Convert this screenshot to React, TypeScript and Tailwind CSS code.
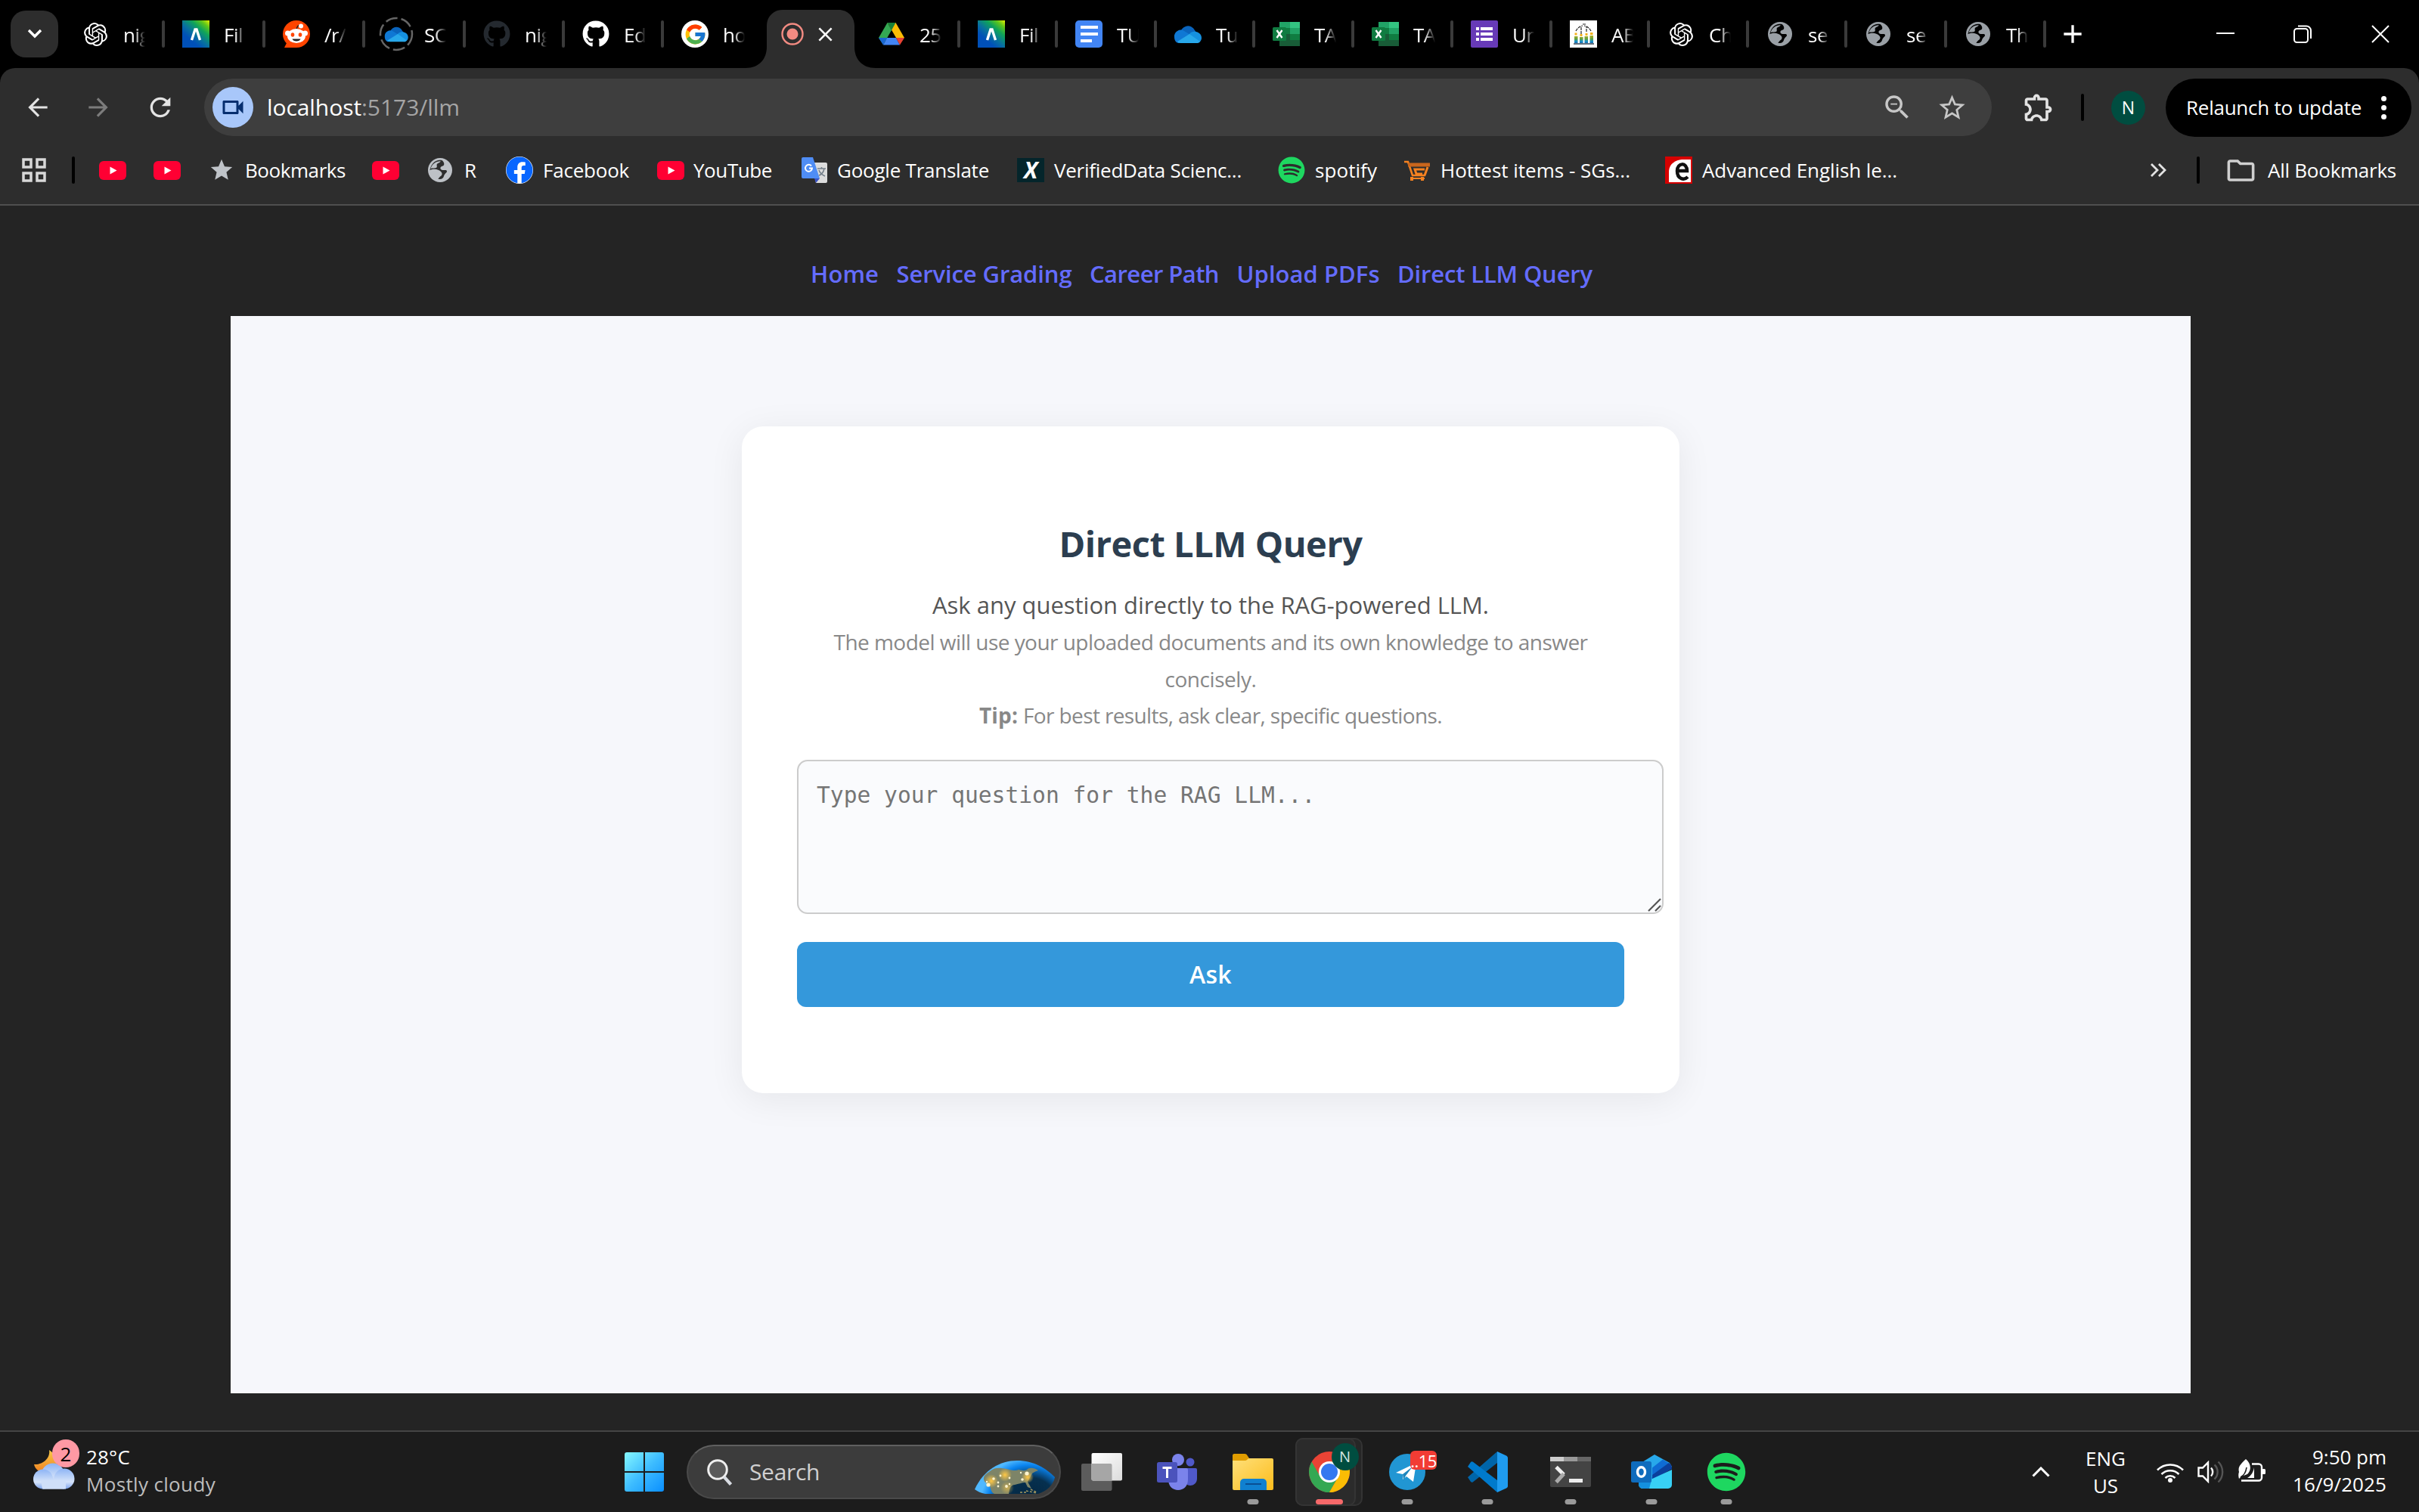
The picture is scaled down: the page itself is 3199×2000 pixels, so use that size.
import { useLayoutEffect, useRef, useState, type ReactNode } from "react";
import { SiOpenai } from "react-icons/si";
import { FaGithub, FaSpotify, FaFacebook } from "react-icons/fa";
import { FcGoogle } from "react-icons/fc";
import {
  MdArrowBack,
  MdArrowForward,
  MdRefresh,
  MdOutlineVideocam,
  MdStarBorder,
  MdStar,
  MdZoomOut,
  MdOutlineExtension,
  MdOutlineFolder,
  MdAdd,
  MdClose,
} from "react-icons/md";

/** Single line of text whose tracking is adjusted to fill the given width. */
function Fit({ w, className = "", children }: { w: number; className?: string; children: string }) {
  const ref = useRef<HTMLSpanElement>(null);
  const [spacing, setSpacing] = useState(0);
  useLayoutEffect(() => {
    if (ref.current) {
      setSpacing((w - ref.current.getBoundingClientRect().width) / children.length);
    }
  }, [w, children]);
  return (
    <span ref={ref} className={`inline-block shrink-0 whitespace-nowrap ${className}`} style={{ letterSpacing: spacing }}>
      {children}
    </span>
  );
}

/* ---------- favicons ---------- */

const OpenAI = () => <SiOpenai className="size-[31px] text-white" />;

const Lambda = () => (
  <svg viewBox="0 0 36 36" className="size-9">
    <defs>
      <linearGradient id="lam" x1="1" y1="0" x2="0.35" y2="0.75">
        <stop offset="0" stopColor="#e6f000" />
        <stop offset="0.22" stopColor="#5cc51c" />
        <stop offset="0.45" stopColor="#0fa35a" />
        <stop offset="0.75" stopColor="#0870a0" />
        <stop offset="1" stopColor="#0050b8" />
      </linearGradient>
    </defs>
    <rect width="36" height="36" fill="url(#lam)" />
    <path d="M12.500 26L17 12h2l4.500 14" fill="none" stroke="#fff" strokeWidth="3.400" />
  </svg>
);

const Reddit = () => (
  <svg viewBox="0 0 36 36" className="size-9">
    <circle cx="18" cy="18" r="18" fill="#ff4500" />
    <path d="M2 36h16V24L6 28z" fill="#ff4500" />
    <path d="M18 12c1-4 2-6 5-5" fill="none" stroke="#222" strokeWidth="1.500" />
    <circle cx="24" cy="7.500" r="3" fill="#fff" />
    <circle cx="6.500" cy="17" r="3.500" fill="#fff" />
    <circle cx="29.500" cy="17" r="3.500" fill="#fff" />
    <ellipse cx="18" cy="20.500" rx="12" ry="9.500" fill="#fff" />
    <ellipse cx="13" cy="19" rx="2.300" ry="2.700" fill="#ff4500" />
    <ellipse cx="23" cy="19" rx="2.300" ry="2.700" fill="#ff4500" />
    <path d="M12.500 24.500h11c-1 4-10 4-11 0z" fill="#222" />
  </svg>
);

const Cloud = ({ ring = false }: { ring?: boolean }) => (
  <svg viewBox="0 0 46 46" className="-m-[5px] size-[46px] shrink-0">
    {ring && <circle cx="23" cy="23" r="21" fill="none" stroke="#666" strokeWidth="2.500" strokeDasharray="16 5" />}
    <g transform={ring ? "translate(3.500 3.200) scale(0.86)" : ""}>
      <path d="M13 23a10 10 0 0 1 19-5 9 9 0 0 1 3 6L20 30z" fill="#0a64bc" />
      <path d="M5 27a8.500 8.500 0 0 1 13-8l13 8-20 8c-4 0-6-4-6-8z" fill="#0f78d4" />
      <path d="M25 23c4-6 16-3 16 5 0 4-3 7-6 7L20 30z" fill="#1590df" />
      <path d="M9 33l16-10 14 10c-2 2-4 2-5 2H13c-2 0-3-1-4-2z" fill="#28a8ea" />
    </g>
  </svg>
);

const Drive = () => (
  <svg viewBox="0 0 34 30" className="h-[30px] w-[34px]">
    <path d="M22.500 0L34 20H23L11.500 0z" fill="#fbbc04" />
    <path d="M11.500 0L17 10 6 29 0 20z" fill="#34a853" />
    <path d="M11.500 0h11L17 10z" fill="#188038" />
    <path d="M11 20h12l5 9.500H6z" fill="#4285f4" />
    <path d="M0 20h11L6 29.500z" fill="#1967d2" />
    <path d="M23 20h11l-6 9.500z" fill="#ea4335" />
  </svg>
);

const Docs = () => (
  <svg viewBox="0 0 36 36" className="size-9">
    <rect width="36" height="36" rx="5" fill="#4285f4" />
    <path d="M7 9h23M7 18h23M7 27h15" stroke="#fff" strokeWidth="4" />
  </svg>
);

const Excel = () => (
  <svg viewBox="0 0 36 36" className="size-9">
    <path d="M9 2h14v8H9z" fill="#21a366" />
    <path d="M23 2h13v8H23z" fill="#33c481" />
    <path d="M9 10h14v8H9z" fill="#107c41" />
    <path d="M23 10h13v8H23z" fill="#21a366" />
    <path d="M9 18h14v8H9z" fill="#185c37" />
    <path d="M23 18h13v8H23z" fill="#107c41" />
    <path d="M9 26h27v8H9z" fill="#185c37" />
    <rect y="9" width="18" height="18" rx="1.500" fill="#107c41" />
    <path d="M5.500 13l7 10M12.500 13l-7 10" stroke="#fff" strokeWidth="2.400" />
  </svg>
);

const Forms = () => (
  <svg viewBox="0 0 36 36" className="size-9">
    <rect width="36" height="36" rx="2" fill="#673ab7" />
    <path d="M7 11h4M7 18h4M7 25h4M13 11h16M13 18h16M13 25h16" stroke="#fff" strokeWidth="4" />
  </svg>
);

const People = () => (
  <svg viewBox="0 0 36 36" className="size-9">
    <defs>
      <linearGradient id="ppl" x1="0" y1="0" x2="0" y2="1">
        <stop offset="0" stopColor="#b8b020" />
        <stop offset="0.450" stopColor="#5fa040" />
        <stop offset="0.750" stopColor="#1a94c8" />
        <stop offset="1" stopColor="#1a6ab0" />
      </linearGradient>
    </defs>
    <rect width="36" height="36" fill="#fff" />
    <path d="M8 14c2-4 5-6 9-7M28 14c-2-4-5-6-9-7M15 18V9M22 15V8M17 5h4" fill="none" stroke="#222" strokeWidth="1.200" strokeDasharray="4 1" />
    <path d="M6 21h4.500v9H6zM13 22h4.500v8H13zM19.500 21H24v9h-4.500zM26.500 20H31v10h-4.500z" fill="url(#ppl)" />
    <path d="M6.500 16.500h3v3h-3zM13.500 18h3v3h-3zM20.500 17h3v3h-3zM27 16h3.500v3H27z" fill="#f5b21a" />
    <path d="M5 31h27" stroke="#345" strokeWidth="1.500" />
  </svg>
);

const Globe = ({ cut = "#000" }: { cut?: string }) => (
  <svg viewBox="0 0 24 24" className="size-8">
    <circle cx="12" cy="12" r="12" fill={cut === "#000" ? "#9aa0a6" : "#bdc1c6"} />
    <path
      d="M1.800 12.200C4 10.500 8 10.800 10.500 12c1.600.8 2.800 1.600 3.300 3 .4 1.400-.3 2.600-1.500 3.200-1 .6-1.200 1.700-2.300 2.600 3.400.7 5.300-.6 5.800-3 .3-1.400 1.500-2.500 2.600-3.600.7-.8.500-2-.7-2.200h-3.400c-1.600-.2-2.500-1.600-1.800-2.800.8-1.200 2.700-.8 3.300-2.200.6-1.600-.2-3.100-1.600-4.600-5.500-1.600-11 2-12.400 9.800z"
      fill={cut}
    />
    <path d="M2.600 10.500C4 6 8 3 12.500 3.200c-.3 1.800-3 1.600-3.700 3-.4 1.400.6 2.300-.4 3.300-1.400 1-4 .2-5.800 1z" fill={cut === "#000" ? "#9aa0a6" : "#bdc1c6"} />
  </svg>
);

const GoogleRound = () => (
  <span className="grid size-9 place-items-center rounded-full bg-white">
    <FcGoogle className="size-[31px]" />
  </span>
);

type TabInfo = { w: string; icon: ReactNode; text: string };

const tabsBefore: TabInfo[] = [
  { w: "w-[133px]", icon: <OpenAI />, text: "nig" },
  { w: "w-[133px]", icon: <Lambda />, text: "Fil" },
  { w: "w-[132px]", icon: <Reddit />, text: "/r/" },
  { w: "w-[133px]", icon: <Cloud ring />, text: "SC" },
  { w: "w-[131px]", icon: <FaGithub className="size-9 text-[#24292f]" />, text: "nig" },
  { w: "w-[131px]", icon: <FaGithub className="size-9 text-white" />, text: "Ed" },
  { w: "w-[130px]", icon: <GoogleRound />, text: "ho" },
];

const tabsAfter: TabInfo[] = [
  { w: "w-[132px]", icon: <Drive />, text: "25" },
  { w: "w-[129px]", icon: <Lambda />, text: "Fil" },
  { w: "w-[131px]", icon: <Docs />, text: "TU" },
  { w: "w-[130px]", icon: <Cloud />, text: "Tu" },
  { w: "w-[131px]", icon: <Excel />, text: "TA" },
  { w: "w-[131px]", icon: <Excel />, text: "TA" },
  { w: "w-[131px]", icon: <Forms />, text: "Un" },
  { w: "w-[129px]", icon: <People />, text: "AB" },
  { w: "w-[131px]", icon: <OpenAI />, text: "Ch" },
  { w: "w-[130px]", icon: <Globe />, text: "se" },
  { w: "w-[132px]", icon: <Globe />, text: "se" },
  { w: "w-[131px]", icon: <Globe />, text: "Th" },
];

function Tab({ tab, sep = true }: { tab: TabInfo; sep?: boolean }) {
  return (
    <div className={`flex h-[90px] shrink-0 items-center ${tab.w}`}>
      <span className="ml-[23px] grid size-9 shrink-0 place-items-center">{tab.icon}</span>
      <span className="mt-[2px] ml-[19px] w-[29px] overflow-hidden text-[26px] leading-9 tracking-[-0.5px] whitespace-nowrap text-white [mask-image:linear-gradient(to_right,black_50%,transparent)]">
        {tab.text}
      </span>
      {sep && <span className="ml-auto h-9 w-1 rounded-sm bg-[#3a3a3a]" />}
    </div>
  );
}

function TabStrip() {
  return (
    <div className="flex h-[90px] items-center bg-black">
      <button className="ml-[14px] grid h-[62px] w-[63px] shrink-0 place-items-center rounded-[20px] bg-[#2d2d2d]">
        <svg viewBox="0 0 20 14" className="h-[14px] w-5">
          <path d="M2 2l8 8 8-8" fill="none" stroke="#fff" strokeWidth="3.400" />
        </svg>
      </button>
      <div className="ml-[8px] flex">
        {tabsBefore.map((t, i) => (
          <Tab key={i} tab={t} sep={i < 6} />
        ))}
      </div>
      <div className="-mr-[21px] -ml-[22px] flex h-[90px] w-[173px] shrink-0">
        <svg viewBox="0 0 173 90" className="absolute h-[90px] w-[173px]">
          <path d="M0 90c18 0 28-12 28-28V34c0-12 9-21 21-21h74c12 0 21 9 21 21v28c0 16 10 28 28 28z" fill="#2d2d2d" />
        </svg>
        <div className="relative flex items-center">
          <svg viewBox="0 0 30 30" className="ml-[47px] size-[30px]">
            <circle cx="15" cy="15" r="13.500" fill="none" stroke="#f28b82" strokeWidth="2.400" />
            <circle cx="15" cy="15" r="7.500" fill="#f28b82" />
          </svg>
          <MdClose className="ml-[13px] size-[31px] text-white" />
        </div>
      </div>
      <div className="flex">
        {tabsAfter.map((t, i) => (
          <Tab key={i} tab={t} />
        ))}
      </div>
      <MdAdd className="ml-[15px] size-[40px] shrink-0 text-white" />
      <svg viewBox="0 0 24 24" className="ml-[170px] size-6 shrink-0">
        <path d="M0 11h24" stroke="#fff" strokeWidth="2" />
      </svg>
      <svg viewBox="0 0 24 24" className="ml-[78px] size-6 shrink-0" fill="none" stroke="#fff" strokeWidth="2">
        <rect x="1" y="5" width="18" height="18" rx="3.500" />
        <path d="M6 1.500h11a6 6 0 0 1 6 6V18" />
      </svg>
      <svg viewBox="0 0 24 24" className="ml-[79px] size-6 shrink-0">
        <path d="M1 1l22 22M23 1L1 23" stroke="#fff" strokeWidth="2" />
      </svg>
    </div>
  );
}

function Toolbar() {
  return (
    <div className="flex h-[104px] items-center">
      <MdArrowBack className="ml-[31px] size-[38px] shrink-0 text-[#e3e3e3]" />
      <MdArrowForward className="ml-[42px] size-[38px] shrink-0 text-[#7c7c7c]" />
      <MdRefresh className="ml-[43px] size-[40px] shrink-0 text-[#e3e3e3]" />
      <div className="ml-[38px] flex h-[76px] w-[2364px] shrink-0 items-center rounded-full bg-[#3e3e3e]">
        <span className="ml-[11px] grid size-[54px] place-items-center rounded-full bg-[#a8c7fa]">
          <MdOutlineVideocam className="size-[36px] text-[#062e6f]" />
        </span>
        <span className="ml-[18px] flex text-[30px] leading-10">
          <Fit w={125} className="text-white">localhost</Fit>
          <Fit w={130} className="text-[#a5a5a5]">:5173/llm</Fit>
        </span>
        <MdZoomOut className="ml-auto size-[42px] text-[#c7c7c7]" />
        <MdStarBorder className="mr-[32px] ml-[31px] size-[41px] text-[#c7c7c7]" />
      </div>
      <MdOutlineExtension className="ml-[40px] size-[44px] shrink-0 text-[#e3e3e3]" />
      <span className="ml-[34px] h-9 w-1 shrink-0 rounded-sm bg-black" />
      <span className="ml-[36px] grid size-[45px] shrink-0 place-items-center rounded-full bg-[#004d40] text-[23px] leading-none text-white">
        N
      </span>
      <div className="ml-[27px] flex h-[77px] w-[325px] shrink-0 items-center rounded-full bg-black">
        <Fit w={232} className="ml-[27px] text-[26px] leading-9 text-white">Relaunch to update</Fit>
        <span className="ml-[26px] flex flex-col gap-[5px]">
          <span className="size-[7px] rounded-full bg-white" />
          <span className="size-[7px] rounded-full bg-white" />
          <span className="size-[7px] rounded-full bg-white" />
        </span>
      </div>
    </div>
  );
}

const YouTube = ({ className = "" }: { className?: string }) => (
  <svg viewBox="0 0 36 25" className={`h-[25px] w-9 shrink-0 ${className}`}>
    <rect width="36" height="25" rx="6" fill="#ff0033" />
    <path d="M14.500 7.500v10l9-5z" fill="#fff" />
  </svg>
);

const Translate = () => (
  <svg viewBox="0 0 34 34" className="ml-[39px] size-[34px] shrink-0">
    <path d="M14 7h18a2 2 0 0 1 2 2v23a2 2 0 0 1-2 2H19z" fill="#dcdcdc" />
    <path d="M17 28h7l-5 6z" fill="#3a53c5" />
    <path d="M2 0h13l9 28H2a2 2 0 0 1-2-2V2a2 2 0 0 1 2-2z" fill="#4f8df5" />
    <path d="M13 11.500a4.500 4.500 0 1 0 1 3h-4" fill="none" stroke="#fff" strokeWidth="2" />
    <path d="M21 15h11M26.500 13v2M30 15c-1 5-4 8-7 9M23 17c1 3 4 6 8 8" fill="none" stroke="#75808a" strokeWidth="1.600" />
  </svg>
);

function BookmarksBar() {
  const label = "text-[26px] leading-9 text-white";
  return (
    <div className="flex h-[62px] items-center">
      <svg viewBox="0 0 32 32" className="ml-[29px] size-8 shrink-0" fill="none" stroke="#d8d8d8" strokeWidth="3.500">
        <path d="M2 2h10v10H2zM20 2h10v10H20zM2 20h10v10H2zM20 20h10v10H20z" />
      </svg>
      <span className="ml-[34px] h-9 w-1 shrink-0 rounded-sm bg-black" />
      <YouTube className="ml-[32px]" />
      <YouTube className="ml-[36px]" />
      <MdStar className="ml-[37px] size-[34px] shrink-0 text-[#c0c4c9]" />
      <Fit w={133} className={`ml-[14px] ${label}`}>Bookmarks</Fit>
      <YouTube className="ml-[35px]" />
      <span className="ml-[38px]">
        <Globe cut="#2d2d2d" />
      </span>
      <span className={`ml-[16px] w-[18px] ${label}`}>R</span>
      <span className="ml-[37px] size-9 shrink-0 rounded-full bg-white">
        <FaFacebook className="size-9 text-[#0866ff]" />
      </span>
      <Fit w={114} className={`ml-[13px] ${label}`}>Facebook</Fit>
      <YouTube className="ml-[37px]" />
      <Fit w={104} className={`ml-[12px] ${label}`}>YouTube</Fit>
      <Translate />
      <Fit w={201} className={`ml-[13px] ${label}`}>Google Translate</Fit>
      <span className="ml-[37px] grid h-8 w-9 shrink-0 place-items-center bg-[#04252b] text-[30px] leading-none font-bold text-white italic">
        X
      </span>
      <Fit w={248} className={`ml-[13px] ${label}`}>VerifiedData Scienc...</Fit>
      <span className="ml-[48px] grid size-9 shrink-0 place-items-center rounded-full bg-[#2d2d2d]">
        <FaSpotify className="size-9 text-[#1ed760]" />
      </span>
      <Fit w={82} className={`ml-[13px] ${label}`}>spotify</Fit>
      <svg viewBox="0 0 34 36" className="ml-[36px] h-9 w-[34px] shrink-0" fill="none" stroke="#f58220">
        <path d="M0 7h5l6 18h17" strokeWidth="2.600" />
        <path d="M5 11h29" strokeWidth="5" stroke="#c9661c" />
        <path d="M31 14l-4 11M27 17H14l2 6h8" strokeWidth="3" />
        <path d="M10 27v5M24 27v5" strokeWidth="4" />
        <path d="M8 29h19" strokeWidth="2" />
      </svg>
      <Fit w={251} className={`ml-[14px] ${label}`}>Hottest items - SGs...</Fit>
      <svg viewBox="0 0 36 36" className="ml-[46px] size-9 shrink-0">
        <rect width="36" height="36" fill="#d60000" />
        <path d="M5 34V19C6 9 14 5 22 4h12v30z" fill="#fff" />
        <path d="M16 19h13c0-12-13-11-13 0 0 11 9 13 14 8" fill="none" stroke="#111" strokeWidth="4.500" />
      </svg>
      <Fit w={258} className={`ml-[13px] ${label}`}>Advanced English le...</Fit>
      <svg viewBox="0 0 21 18" className="ml-auto h-[18px] w-[21px] shrink-0" fill="none" stroke="#e3e3e3" strokeWidth="2.800">
        <path d="M1 1l8 8-8 8M11 1l8 8-8 8" />
      </svg>
      <span className="ml-[40px] h-9 w-1 shrink-0 rounded-sm bg-black" />
      <MdOutlineFolder className="ml-[33px] size-[43px] shrink-0 text-[#d0d0d0]" />
      <Fit w={170} className={`mr-[30px] ml-[14px] ${label}`}>All Bookmarks</Fit>
    </div>
  );
}

function Page() {
  const small = "text-[28px] leading-[48.6px] text-[#888]";
  return (
    <div className="flex h-[1620px] flex-col bg-[#242424]">
      <nav className="flex gap-[23.5px] pt-[70px] pb-[36px] pl-[1072px] text-[31px] leading-10 font-semibold text-[#646cff]">
        <Fit w={90}>Home</Fit>
        <Fit w={232}>Service Grading</Fit>
        <Fit w={171}>Career Path</Fit>
        <Fit w={189}>Upload PDFs</Fit>
        <Fit w={258}>Direct LLM Query</Fit>
      </nav>
      <main className="ml-[305px] h-[1425px] w-[2592px] bg-[#f6f7fb] pt-[146px]">
        <section className="mx-auto flex h-[882px] w-[1240px] flex-col items-center rounded-[28px] bg-white px-[73px] pt-[125px] shadow-[0_8px_48px_rgba(0,0,0,0.07)]">
          <h1 className="flex h-[60px] text-[47px] leading-[60px] font-bold text-[#2c3e50]">
            <Fit w={401}>Direct LLM Query</Fit>
          </h1>
          <p className="mt-[25.5px] text-[31px] leading-[50px] text-[#555]">
            <Fit w={736}>Ask any question directly to the RAG-powered LLM.</Fit>
          </p>
          <div className={`mt-[0.7px] flex flex-col items-center ${small}`}>
            <Fit w={997}>The model will use your uploaded documents and its own knowledge to answer</Fit>
            <Fit w={121}>concisely.</Fit>
            <span className="flex">
              <Fit w={51} className="font-bold">Tip:</Fit>
              <Fit w={554} className="ml-[7px]">For best results, ask clear, specific questions.</Fit>
            </span>
          </div>
          <div className="relative mt-[34px] h-[204px] w-[1146px] shrink-0 self-start">
            <textarea
              className="block h-[204px] w-[1146px] resize-none rounded-[14px] border-2 border-[#ccc] bg-[#fafbfd] px-[24px] pt-[25px] font-['DejaVu_Sans_Mono',monospace] text-[29.6px] leading-10 placeholder:text-[#757575] placeholder:opacity-100"
              placeholder="Type your question for the RAG LLM..."
            />
            <svg viewBox="0 0 18 18" className="absolute right-[3px] bottom-[3px] size-[18px]">
              <path d="M1 17L17 1M10 17l7-7" stroke="#555" strokeWidth="2.200" />
            </svg>
          </div>
          <button className="mt-[37px] h-[86px] w-full shrink-0 rounded-[12px] bg-[#3498db] text-[32px] leading-10 font-semibold text-white">
            <Fit w={56}>Ask</Fit>
          </button>
        </section>
      </main>
    </div>
  );
}

/* ---------- taskbar ---------- */

const Weather = () => (
  <div className="relative ml-[44px] h-[66px] w-[62px] shrink-0">
    <svg viewBox="0 0 62 66" className="h-[66px] w-[62px]">
      <defs>
        <linearGradient id="moon" x1="0" y1="0" x2="0" y2="1">
          <stop offset="0" stopColor="#f7c948" />
          <stop offset="1" stopColor="#f08020" />
        </linearGradient>
        <linearGradient id="wcl" x1="0" y1="0" x2="0" y2="1">
          <stop offset="0" stopColor="#8db4f5" />
          <stop offset="0.650" stopColor="#d6e4fa" />
          <stop offset="1" stopColor="#7da3ec" />
        </linearGradient>
      </defs>
      <path d="M21 14c2 10-8 20-20 19 2 9 12 14 22 10s14-18-2-29z" fill="url(#moon)" />
      <circle cx="26" cy="47" r="15.500" fill="url(#wcl)" />
      <path d="M13 48.500h28v17H13z" fill="#c9dbf9" />
      <circle cx="13" cy="52.500" r="13" fill="url(#wcl)" />
      <circle cx="41" cy="52" r="13.500" fill="url(#wcl)" />
      <path d="M10 54h33v11.500H12z" fill="#cfdff9" />
    </svg>
    <span className="absolute top-0 left-[25px] grid h-[37px] w-9 place-items-center rounded-full bg-[#ff99a4] text-[26px] leading-none text-black">
      2
    </span>
  </div>
);

const Windows = () => (
  <svg viewBox="0 0 52 52" className="size-[52px] shrink-0">
    <defs>
      <linearGradient id="win" x1="0" y1="0" x2="52" y2="52" gradientUnits="userSpaceOnUse">
        <stop offset="0" stopColor="#86f8ff" />
        <stop offset="0.500" stopColor="#3dbcff" />
        <stop offset="1" stopColor="#0a8fff" />
      </linearGradient>
    </defs>
    <path
      d="M3 0h22v25H0V3a3 3 0 0 1 3-3zM27 0h22a3 3 0 0 1 3 3v22H27zM0 27h25v25H3a3 3 0 0 1-3-3zM27 27h25v22a3 3 0 0 1-3 3H27z"
      fill="url(#win)"
    />
  </svg>
);

const Earth = () => (
  <svg viewBox="0 0 106 44" className="mt-[14px] mr-[6px] ml-auto h-[44px] w-[106px]">
    <defs>
      <radialGradient id="sea" cx="72" cy="62" r="66" gradientUnits="userSpaceOnUse">
        <stop offset="0" stopColor="#04233c" />
        <stop offset="0.600" stopColor="#06304f" />
        <stop offset="0.850" stopColor="#0a84f0" />
        <stop offset="1" stopColor="#4fb8ff" />
      </radialGradient>
      <radialGradient id="city">
        <stop offset="0" stopColor="#ffc845" />
        <stop offset="1" stopColor="#ffc845" stopOpacity="0" />
      </radialGradient>
    </defs>
    <path d="M0 38C12 12 34 0 56 0c22 0 38 10 50 22-2 10-10 18-22 22H14C8 43 4 41 0 38z" fill="url(#sea)" />
    <path
      d="M20 14c8-6 14-4 22-3 8 2 12 3 16 1 5 1 8 2 11 0 3-3 9-3 15 1-5 2-8 3-9 6-2 3-3 6-5 9l5 9-5-2-3-6c-5 0-9 2-14 3-4 0-6 3-7 7l-1 5H26c-4-2-5-6-6-12-4-3-7-2-8-7s4-8 8-11z"
      fill="#7d8468"
    />
    <circle cx="22" cy="27" r="9" fill="url(#city)" />
    <circle cx="40" cy="19" r="9" fill="url(#city)" />
    <circle cx="70" cy="22" r="8" fill="url(#city)" />
    <circle cx="43" cy="36" r="9" fill="url(#city)" opacity="0.600" />
    <g fill="#fff5cf">
      <circle cx="18" cy="32" r="2.600" />
      <circle cx="25" cy="24" r="1.800" />
      <circle cx="34" cy="20" r="1.400" />
      <circle cx="46" cy="23" r="1.400" />
      <circle cx="31" cy="29" r="1.400" />
      <circle cx="31" cy="34" r="1.400" />
      <circle cx="42" cy="34" r="1.900" />
      <circle cx="46" cy="31" r="1.200" />
      <circle cx="69" cy="17" r="2.600" />
      <circle cx="63" cy="25" r="1.800" />
      <circle cx="61" cy="16" r="1.200" />
      <circle cx="16" cy="28" r="1.200" />
    </g>
    <path d="M60 42h8M68 40l14 3M74 38l8 4" stroke="#a89a60" strokeWidth="1.400" strokeDasharray="3 2" />
  </svg>
);

const TaskView = () => (
  <svg viewBox="0 0 54 50" className="h-[50px] w-[54px] shrink-0">
    <defs>
      <linearGradient id="tv" x1="0" y1="0" x2="1" y2="1">
        <stop offset="0" stopColor="#fff" />
        <stop offset="1" stopColor="#dcdcdc" />
      </linearGradient>
    </defs>
    <rect y="14" width="40.500" height="36" rx="2" fill="#5c5c5c" />
    <rect x="13.500" width="40.500" height="36.500" rx="2" fill="url(#tv)" />
    <path d="M13.500 14h25a2 2 0 0 1 2 2v20.500h-25a2 2 0 0 1-2-2z" fill="#a6a6a6" />
  </svg>
);

const Teams = () => (
  <svg viewBox="0 0 53 48" className="h-12 w-[53px] shrink-0">
    <circle cx="44" cy="11" r="5.500" fill="#5059c9" />
    <path d="M36 19h15a2 2 0 0 1 2 2v12c0 6-5 9-9 9s-8-3-8-9z" fill="#5059c9" />
    <circle cx="28" cy="8" r="8" fill="#7b83eb" />
    <path d="M15 19h24a2 2 0 0 1 2 2v13c0 9-6 14-13 14s-13-5-13-14z" fill="#7b83eb" />
    <rect y="11" width="27" height="27" rx="2.500" fill="#4b53bc" />
    <path d="M7.500 18.500h12M13.500 18v14" stroke="#fff" strokeWidth="3" />
  </svg>
);

const Explorer = () => (
  <svg viewBox="0 0 54 48" className="h-12 w-[54px]">
    <defs>
      <linearGradient id="fold" x1="0" y1="0" x2="1" y2="1">
        <stop offset="0" stopColor="#ffe07a" />
        <stop offset="1" stopColor="#fcbc1c" />
      </linearGradient>
    </defs>
    <path d="M2 0h14c2 0 3 1 4 3l4 6H0V2c0-1 1-2 2-2z" fill="#e09c00" />
    <path d="M22 6h30a2 2 0 0 1 2 2v38a2 2 0 0 1-2 2H2a2 2 0 0 1-2-2V9h17c2 0 3-3 5-3z" fill="url(#fold)" />
    <path d="M10 48V38a5 5 0 0 1 5-5h25a5 5 0 0 1 5 5v10z" fill="#1080d0" />
    <path d="M17 40h21" stroke="#0a4f93" strokeWidth="2" />
  </svg>
);

const Chrome = () => (
  <svg viewBox="0 0 54 54" className="size-[54px]">
    <circle cx="27" cy="27" r="27" fill="#ea4335" />
    <path d="M3.600 13.500A27 27 0 0 0 27 54l11.700-20.200-23.400 0z" fill="#34a853" />
    <path d="M27 54a27 27 0 0 0 23.400-40.500H27l11.700 20.300z" fill="#fbbc04" />
    <circle cx="27" cy="27" r="14" fill="#fff" />
    <circle cx="27" cy="27" r="11" fill="#3478f0" />
  </svg>
);

const Telegram = () => (
  <svg viewBox="0 0 48 48" className="size-12">
    <circle cx="24" cy="24" r="24" fill="#2196d3" />
    <path d="M9 25L36 12l-4 25-9-7-5 4v-7z" fill="#fff" />
    <path d="M18 27l13-10-9 12-3 6z" fill="#1f86bd" />
  </svg>
);

const VSCode = () => (
  <svg viewBox="0 0 54 54" className="size-[54px]">
    <path d="M1 34l4 6c1 1 2 1 3 .2L40 15V0z" fill="#0065a9" />
    <path d="M1 20l4-6c1-1 2-1 3-.2L40 38v16z" fill="#007acc" />
    <path d="M40 0l12 5.500c1 .5 2 1.500 2 3v37c0 1.500-1 2.500-2 3L40 54z" fill="#1f9cf0" />
  </svg>
);

const Terminal = () => (
  <svg viewBox="0 0 54 40" className="h-10 w-[54px]">
    <rect width="54" height="40" rx="2" fill="#444" />
    <path d="M0 0h18v6H0z" fill="#ccc" />
    <path d="M18 0h18v6H18z" fill="#999" />
    <path d="M36 0h18v6H36z" fill="#666" />
    <path d="M8 13.500l10 10" stroke="#f0f0f0" strokeWidth="5" />
    <path d="M18 22.500L8 33.500" stroke="#aaa" strokeWidth="5" />
    <path d="M25 29h18v5H25z" fill="#eee" />
  </svg>
);

const Outlook = () => (
  <svg viewBox="0 0 54 46" className="h-[46px] w-[54px]">
    <path d="M10 17V13L31 0l20 11 3 5-29 18z" fill="#28a8ea" />
    <path d="M42 6.500l8 5-22 17v-11z" fill="#0f6cd4" />
    <path d="M50 11c3 2 4 4 4 8L28 34v-7z" fill="#0b3f9c" />
    <path d="M54 20v20a5 5 0 0 1-5 5H16a6 6 0 0 1-6-5V30l18 2z" fill="#38d0f5" />
    <path d="M10 36l18-6-4 15h-8c-4 0-6-3-6-5z" fill="#1490df" />
    <rect y="9" width="27" height="28" rx="2.500" fill="#0f6cbd" />
    <ellipse cx="13.500" cy="23" rx="5" ry="6.300" fill="none" stroke="#fff" strokeWidth="3.400" />
  </svg>
);

function TaskApp({ children, className = "" }: { children: ReactNode; className?: string }) {
  return (
    <div className={`relative grid h-[106px] shrink-0 place-items-center ${className}`}>
      {children}
      <span className="absolute bottom-[10px] left-1/2 h-[7px] w-[15px] -translate-x-1/2 rounded-full bg-[#9a9a9a]" />
    </div>
  );
}

function Taskbar() {
  return (
    <footer className="flex h-[108px] items-center border-t-2 border-[#454545] bg-[#1c1c1c] text-[26px] leading-9 text-white">
      <div className="-mt-[20px]">
        <Weather />
      </div>
      <div className="-mt-[4px] ml-[8px] flex w-[174px] flex-col items-start">
        <Fit w={58}>28°C</Fit>
        <Fit w={171} className="text-[#bdbdbd]">Mostly cloudy</Fit>
      </div>
      <span className="ml-[538px]">
        <Windows />
      </span>
      <div className="ml-[30px] flex h-[72px] w-[495px] shrink-0 items-center overflow-hidden rounded-full border-2 border-t-[#606060] border-r-[#4a4a4a] border-b-[#4a4a4a] border-l-[#4a4a4a] bg-[#3c3c3c]">
        <svg viewBox="0 0 33 35" className="ml-[25px] h-[35px] w-[33px]">
          <circle cx="14" cy="14" r="12.300" fill="#5a5a5a" stroke="#eee" strokeWidth="3" />
          <path d="M22.500 23.500l9 10" stroke="#d8dce2" strokeWidth="4.200" />
        </svg>
        <Fit w={93} className="ml-[23px] text-[30px] leading-10 text-[#d0d0d0]">Search</Fit>
        <Earth />
      </div>
      <span className="ml-[27px]">
        <TaskView />
      </span>
      <span className="ml-[46px]">
        <Teams />
      </span>
      <TaskApp className="ml-[47px] w-[54px]">
        <Explorer />
      </TaskApp>
      <div className="ml-[29px] flex h-[90px] w-[89px] shrink-0 rounded-[10px] border-2 border-[#333] bg-[#262626]">
        <div className="-m-[2px] flex h-[90px] w-[80px] items-center justify-center rounded-[10px] border-2 border-[#343434] bg-[#2b2b2b]">
          <div className="relative ml-[9px] size-[54px] shrink-0">
            <Chrome />
            <span className="absolute -top-[11px] left-[30px] grid size-9 place-items-center rounded-full bg-[#004d40] text-[20px] leading-none text-[#d5e5e0]">
              N
            </span>
            <span className="absolute top-[63px] left-[9px] h-[7px] w-[36px] rounded-full bg-[#f6696a]" />
          </div>
        </div>
      </div>
      <TaskApp className="ml-[35px] w-[48px]">
        <Telegram />
        <span className="absolute top-[25px] left-[28px] grid h-[25px] w-[35px] place-items-center rounded-[6px] bg-[#f23c34] text-[22px] leading-none tracking-tight text-white">
          ..15
        </span>
      </TaskApp>
      <TaskApp className="ml-[55px] w-[54px]">
        <VSCode />
      </TaskApp>
      <TaskApp className="ml-[56px] w-[54px]">
        <Terminal />
      </TaskApp>
      <TaskApp className="ml-[53px] w-[54px]">
        <Outlook />
      </TaskApp>
      <TaskApp className="ml-[46px] w-[52px]">
        <FaSpotify className="size-[52px] text-[#1ed760]" />
      </TaskApp>
      <svg viewBox="0 0 24 14" className="ml-auto h-[14px] w-6 shrink-0">
        <path d="M1.500 12.500L12 2l10.500 10.500" fill="none" stroke="#fff" strokeWidth="3" />
      </svg>
      <div className="ml-[47px] flex w-[53px] shrink-0 flex-col items-center">
        <Fit w={53}>ENG</Fit>
        <Fit w={33}>US</Fit>
      </div>
      <svg viewBox="0 0 36 28" className="ml-[41px] h-7 w-9 shrink-0" fill="none" stroke="#fff" strokeWidth="2.600">
        <path d="M1 11.500a24 24 0 0 1 34 0M6.500 17a16.300 16.300 0 0 1 23 0M11.500 22a9.200 9.200 0 0 1 13 0" />
        <circle cx="18" cy="25" r="3" fill="#fff" stroke="none" />
      </svg>
      <svg viewBox="0 0 36 30" className="ml-[18px] h-[30px] w-9 shrink-0" fill="none" strokeWidth="2.400">
        <path d="M1.500 9.500H7L14 2.500v25l-7-7H1.500z" stroke="#fff" />
        <path d="M18 9.500a8 8 0 0 1 0 11" stroke="#fff" />
        <path d="M22.500 5.500a13 13 0 0 1 0 19M27.500 1.500a19 19 0 0 1 0 27" stroke="#555" />
      </svg>
      <svg viewBox="0 0 36 30" className="-mt-[4px] ml-[18px] h-[30px] w-9 shrink-0">
        <path d="M18 6.500h9a4 4 0 0 1 4 4v14a4 4 0 0 1-4 4H4" fill="none" stroke="#fff" strokeWidth="2.400" />
        <path d="M32 13h2.500a1.500 1.500 0 0 1 1.500 1.500v4a1.500 1.500 0 0 1-1.500 1.500H32z" fill="#fff" />
        <path d="M10 0c6 5 8 13 3 19-3 3-7 2-9 4l-3 3c-1-4-1-6 0-9-2-7 3-11 9-17z" fill="#fff" />
        <path d="M3 24c4-2 7-6 8-13" fill="none" stroke="#1c1c1c" strokeWidth="1.600" />
        <path d="M21 11v14h-9c5-3 8-8 9-14z" fill="#fff" />
      </svg>
      <div className="-mt-[4px] mr-[43px] ml-[36px] flex shrink-0 flex-col items-end">
        <Fit w={98}>9:50 pm</Fit>
        <Fit w={124}>16/9/2025</Fit>
      </div>
    </footer>
  );
}

export default function App() {
  return (
    <div className="flex h-[2000px] w-[3199px] flex-col overflow-hidden bg-black font-['Open_Sans','Noto_Sans',sans-serif]">
      <TabStrip />
      <header className="h-[182px] rounded-t-[20px] border-b-2 border-[#4f4f4f] bg-[#2d2d2d]">
        <Toolbar />
        <BookmarksBar />
      </header>
      <Page />
      <Taskbar />
    </div>
  );
}
